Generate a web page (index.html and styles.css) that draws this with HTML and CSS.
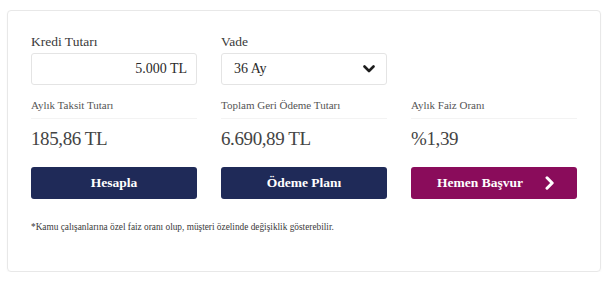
FILE: index.html
```html
<!DOCTYPE html>
<html lang="tr">
<head>
<meta charset="utf-8">
<link rel="stylesheet" href="styles.css">
</head>
<body>
<div class="card">
  <div class="row fields">
    <div class="field">
      <label class="label">Kredi Tutarı</label>
      <div class="input amount">5.000 TL</div>
    </div>
    <div class="field">
      <label class="label">Vade</label>
      <div class="input select">
        <span>36 Ay</span>
        <svg class="caret" width="12" height="8" viewBox="0 0 12 8"><path d="M1.5 1.5 L6 6 L10.5 1.5" fill="none" stroke="#1d1d1d" stroke-width="2.6" stroke-linecap="round" stroke-linejoin="round"/></svg>
      </div>
    </div>
    <div class="field"></div>
  </div>
  <div class="row results">
    <div class="result">
      <div class="rlabel">Aylık Taksit Tutarı</div>
      <div class="value">185,86 TL</div>
      <button class="btn navy">Hesapla</button>
    </div>
    <div class="result">
      <div class="rlabel">Toplam Geri Ödeme Tutarı</div>
      <div class="value">6.690,89 TL</div>
      <button class="btn navy">Ödeme Planı</button>
    </div>
    <div class="result">
      <div class="rlabel">Aylık Faiz Oranı</div>
      <div class="value">%1,39</div>
      <button class="btn purple"><span>Hemen Başvur</span>
        <svg class="arrow" width="10" height="14" viewBox="0 0 10 14"><path d="M2 1.8 L7.2 7 L2 12.2" fill="none" stroke="#fff" stroke-width="3" stroke-linecap="round" stroke-linejoin="round"/></svg>
      </button>
    </div>
  </div>
  <p class="note">*Kamu çalışanlarına özel faiz oranı olup, müşteri özelinde değişiklik gösterebilir.</p>
</div>
</body>
</html>
```

FILE: styles.css
```css
* { box-sizing: border-box; }
html, body { margin: 0; background: #fff; }
body {
  padding: 10px 15px 0 7px;
  font-family: "Liberation Serif", "DejaVu Serif", serif;
  color: #333;
}
.card {
  width: 594px;
  height: 262px;
  border: 1px solid #e8e8e8;
  border-radius: 4px;
  box-shadow: 0 1px 2px rgba(0,0,0,0.04);
  padding: 23px 23px 0 23px;
}
.row {
  display: grid;
  grid-template-columns: repeat(3, 1fr);
  column-gap: 24px;
}
.label {
  display: block;
  font-size: 13.5px;
  line-height: 16px;
  color: #3a3a3a;
  margin-bottom: 3px;
}
.input {
  height: 32px;
  border: 1px solid #e4e4e4;
  border-radius: 3px;
  font-size: 14px;
  color: #2a2a2a;
  display: flex;
  align-items: center;
}
.amount { justify-content: flex-end; padding-right: 9px; }
.select { justify-content: space-between; padding: 0 11px 0 12px; }
.caret { display: block; }
.results { margin-top: 13px; }
.rlabel {
  font-size: 11px;
  line-height: 14px;
  color: #555;
  padding-bottom: 6px;
  border-bottom: 1px solid #f3f3f3;
}
.value {
  font-size: 19px;
  line-height: 24px;
  color: #444;
  margin-top: 8px;
  letter-spacing: -0.4px;
}
.btn {
  margin-top: 16px;
  width: 100%;
  height: 32px;
  border: 0;
  border-radius: 3px;
  color: #fff;
  font-family: "Liberation Serif", "DejaVu Serif", serif;
  font-size: 13.5px;
  font-weight: bold;
  display: flex;
  align-items: center;
  justify-content: center;
  padding: 0;
}
.navy { background: #1f2a58; }
.purple { background: #8a0c5b; gap: 22px; padding-left: 4px; }
.arrow { display: block; }
.note {
  margin: 22px 0 0 0;
  font-size: 9.3px;
  line-height: 12px;
  color: #3a3a3a;
}
```
